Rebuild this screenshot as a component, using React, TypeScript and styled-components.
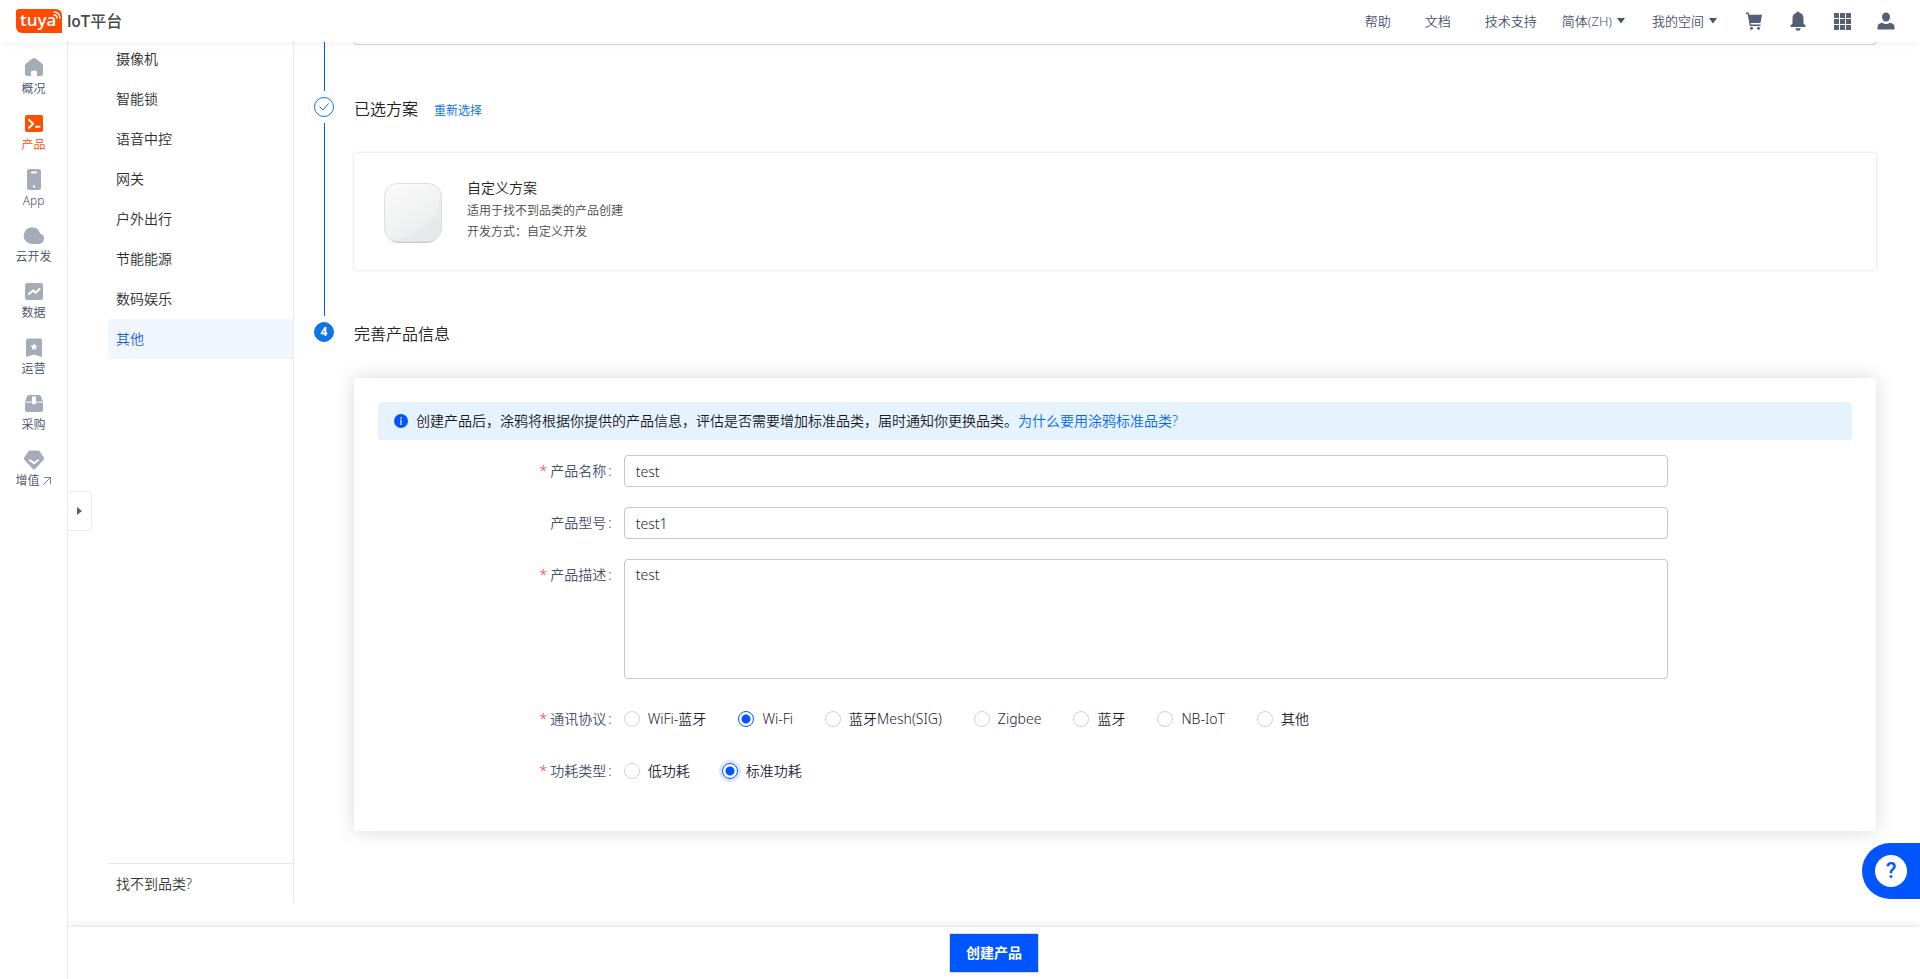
import React, { useState } from "react";
import styled, { createGlobalStyle } from "styled-components";

const GlobalStyle = createGlobalStyle`
  *, *::before, *::after { box-sizing: border-box; }
  body {
    margin: 0;
    background: #fff;
    color: #1f2433;
    font: 350 14px/22px "Noto Sans", "Noto Sans CJK SC", sans-serif;
  }
  button, input, textarea { font: inherit; color: inherit; }
  a { color: #0068f0; text-decoration: none; }
  ul, ol { margin: 0; padding: 0; list-style: none; }
`;

const Page = styled.div`
  display: flex;
  flex-direction: column;
  min-height: 100vh;
`;

/* ---------- top bar ---------- */

const TopBar = styled.header`
  position: sticky;
  top: 0;
  z-index: 10;
  display: flex;
  align-items: center;
  justify-content: space-between;
  height: 42px;
  padding: 0 24px 0 16px;
  background: #fff;
  box-shadow: 0 2px 8px rgba(0, 0, 0, 0.06);
`;

const Brand = styled.a`
  display: flex;
  align-items: center;
  gap: 5px;
  color: #4a4a4a;
`;

const BrandMark = styled.span`
  position: relative;
  width: 46px;
  height: 24px;
  padding-left: 4px;
  border-radius: 3px 6px 0 6px;
  background: #ff4a00;
  color: #fff;
  font: 600 17px/22px "Open Sans", sans-serif;

  svg {
    position: absolute;
    top: 2px;
    right: 1px;
  }
`;

const BrandName = styled.span`
  padding-top: 1px;
  font: 500 16px/24px Roboto, "Noto Sans CJK SC", sans-serif;
`;

const TopNav = styled.nav`
  display: flex;
  align-items: center;
  color: #48526a;
  font-size: 13px;
  line-height: 20px;
`;

const TopLink = styled.a`
  margin-right: 34px;
  color: inherit;

  &:last-of-type { margin-right: 25px; }
`;

const DropButton = styled.button`
  display: flex;
  align-items: center;
  gap: 5px;
  margin-right: 27px;
  padding: 0;
  border: 0;
  background: none;
`;

const IconButton = styled.button`
  display: flex;
  margin-left: 24px;
  padding: 0;
  border: 0;
  background: none;
  color: #555f75;

  &:first-child { margin-left: 0; }
`;

const IconGroup = styled.div`
  display: flex;
`;

/* ---------- frame ---------- */

const Frame = styled.div`
  display: flex;
  flex: 1;
`;

const Rail = styled.nav`
  flex: none;
  width: 68px;
  padding-top: 13px;
  border-right: 1px solid #e9eaf1;
`;

const RailLink = styled.a<{ $active?: boolean }>`
  display: flex;
  flex-direction: column;
  align-items: center;
  height: 44px;
  margin-bottom: 12px;
  color: ${(p) => (p.$active ? "#ff4a00" : "#434e66")};
  font-size: 12px;
  line-height: 20px;

  > svg { flex: none; color: ${(p) => (p.$active ? "#ff5000" : "#a4abb9")}; }
`;

const RailLabel = styled.span`
  display: flex;
  align-items: center;
  gap: 2px;
`;

const RailToggle = styled.button`
  position: absolute;
  top: 491px;
  left: 67px;
  display: flex;
  align-items: center;
  justify-content: center;
  width: 25px;
  height: 40px;
  padding: 0;
  border: 1px solid #e9eaf1;
  border-radius: 0 4px 4px 0;
  background: #fff;
`;

const Content = styled.div`
  display: flex;
  flex: 1;
  flex-direction: column;
  min-width: 0;
`;

const Workspace = styled.div`
  display: flex;
  flex: 1;
  padding: 0 44px 24px 40px;
`;

const Sidebar = styled.aside`
  display: flex;
  flex: none;
  flex-direction: column;
  width: 186px;
  border-right: 1px solid #e8e9ec;
`;

const CategoryList = styled.ul`
  flex: 1;
  margin-top: -3px;
`;

const CategoryLink = styled.a<{ $active?: boolean }>`
  display: block;
  padding: 0 8px;
  background: ${(p) => (p.$active ? "#f1f6fe" : "transparent")};
  color: ${(p) => (p.$active ? "#1a60e0" : "#2c2c2c")};
  line-height: 40px;
`;

const MissingCategory = styled.a`
  padding: 0 8px;
  border-top: 1px solid #e8e8e8;
  color: #383838;
  line-height: 39px;
`;

/* ---------- steps ---------- */

const Steps = styled.ol`
  flex: 1;
  min-width: 0;
  padding-left: 20px;
`;

const Step = styled.li`
  display: grid;
  grid-template-columns: 20px 1fr;
  column-gap: 20px;
`;

const StepTrack = styled.div`
  display: flex;
  flex-direction: column;
  align-items: center;
`;

const StepLine = styled.span<{ $first?: boolean }>`
  flex: 1;
  width: 1px;
  margin: ${(p) => (p.$first ? "0 0 6px" : "6px 0")};
  background: #0055ff;
`;

const StepDot = styled.span<{ $done?: boolean }>`
  display: flex;
  align-items: center;
  justify-content: center;
  width: 20px;
  height: 20px;
  border: 1px solid #1173e6;
  border-radius: 50%;
  background: ${(p) => (p.$done ? "#fff" : "#1173e6")};
  color: ${(p) => (p.$done ? "#1173e6" : "#fff")};
  font-size: 12px;
  font-weight: 700;
  line-height: 18px;
`;

const StepHead = styled.div`
  display: flex;
  align-items: baseline;
  gap: 16px;
  height: 24px;
  margin-bottom: 32px;
  color: #222;

  a { font-size: 12px; }
`;

const StepTitle = styled.h2`
  margin: 0;
  font-size: 16px;
  font-weight: 350;
  line-height: 24px;
`;

const PanelEnd = styled.div`
  height: 3px;
  margin-bottom: 52px;
  border: solid #d5d5d5;
  border-width: 0 1px 1px;
  border-radius: 0 0 4px 4px;
`;

const PlanCard = styled.section`
  display: flex;
  gap: 25px;
  margin-bottom: 52px;
  padding: 24px 30px 27px;
  border-radius: 2px;
  box-shadow: 0 0 3px rgba(0, 0, 0, 0.18);

  svg { margin-top: 6px; }
`;

const PlanName = styled.h3`
  margin: 0 0 1px;
  color: #222;
  font-size: 14px;
  font-weight: 350;
  line-height: 22px;
`;

const PlanNote = styled.p`
  margin: 0;
  color: #484848;
  font-size: 12px;
  line-height: 21px;
`;

/* ---------- form ---------- */

const FormCard = styled.form`
  padding: 24px;
  border-radius: 4px;
  box-shadow: 0 0 20px rgba(0, 0, 0, 0.16);
`;

const Notice = styled.p`
  display: flex;
  align-items: center;
  gap: 8px;
  height: 38px;
  margin: 0 0 15px;
  padding: 0 16px;
  border-radius: 4px;
  background: #e7f2ff;
  color: #151922;
`;

const Field = styled.div<{ $tall?: boolean }>`
  display: grid;
  grid-template-columns: 4fr 17fr 3fr;
  margin-bottom: ${(p) => (p.$tall ? 24 : 20)}px;
`;

const labelStyle = `
  padding-right: 12px;
  color: #485067;
  line-height: 32px;
  text-align: right;
`;

const FieldLabel = styled.label`${labelStyle}`;
const GroupLabel = styled.span`${labelStyle}`;

const Star = styled.span`
  margin-right: 3px;
  color: #f5333f;
`;

const Colon = styled.span`
  margin-left: 2px;
`;

const TextBox = styled.input`
  height: 32px;
  min-width: 0;
  padding: 0 11px;
  border: 1px solid #c5c7d0;
  border-radius: 4px;
  background: #fff;
  outline: none;
`;

const TextArea = styled.textarea`
  height: 120px;
  min-width: 0;
  padding: 4px 11px;
  border: 1px solid #c5c7d0;
  border-radius: 4px;
  background: #fff;
  outline: none;
  resize: none;
`;

const RadioRow = styled.div`
  display: flex;
  flex-wrap: wrap;
  gap: 0 32px;
`;

const RadioLabel = styled.label`
  display: flex;
  align-items: center;
  gap: 8px;
  line-height: 32px;
`;

const Radio = styled.input<{ $ring?: boolean }>`
  appearance: none;
  width: 16px;
  height: 16px;
  margin: 0;
  border: 1px solid #cfd2dc;
  border-radius: 50%;
  background: #fff;

  &:checked {
    border-color: #0055ff;
    background: radial-gradient(circle, #0055ff 4px, #fff 5px);
    box-shadow: ${(p) => (p.$ring ? "0 0 0 3px rgba(0, 85, 255, 0.14)" : "none")};
  }
`;

/* ---------- footer and help ---------- */

const ActionBar = styled.footer`
  position: sticky;
  bottom: 0;
  display: flex;
  align-items: center;
  justify-content: center;
  height: 52px;
  background: #fff;
  box-shadow: 0 0 8px rgba(0, 0, 0, 0.18);
  clip-path: inset(-12px 0 0 0);
`;

const CreateButton = styled.button`
  height: 40px;
  padding: 0 16px;
  border: 1px solid #d5dcec;
  background: #0055ff;
  color: #fff;
  font-weight: 700;
`;

const HelpButton = styled.button`
  position: fixed;
  right: 0;
  bottom: 80px;
  z-index: 11;
  display: flex;
  align-items: center;
  width: 58px;
  height: 56px;
  padding: 0 13px;
  border: 0;
  border-radius: 28px 0 0 28px;
  background: #0055ff;
`;

const HelpMark = styled.span`
  flex: none;
  width: 32px;
  height: 32px;
  border-radius: 50%;
  background: #fff;
  color: #0055ff;
  font: 500 22px/32px Roboto, sans-serif;
`;

/* ---------- drawings ---------- */

const Caret = () => (
  <svg width="8" height="6" viewBox="0 0 8 6" aria-hidden="true">
    <path d="M0 0h8L4 5.5z" fill="currentColor" />
  </svg>
);

const Glyph = ({ children }: { children: React.ReactNode }) => (
  <svg width="24" height="24" viewBox="0 0 24 24" fill="currentColor" aria-hidden="true">
    {children}
  </svg>
);

const white = { fill: "none", stroke: "#fff", strokeWidth: 2, strokeLinecap: "round", strokeLinejoin: "round" } as const;

const railItems = [
  {
    label: "概况",
    icon: <path d="M10.5 3.5a2.5 2.5 0 0 1 3 0l6.2 4.7c.8.6 1.3 1.4 1.3 2.4v8.2a2.2 2.2 0 0 1-2.2 2.2H15v-4.2a1 1 0 0 0-1-1h-4a1 1 0 0 0-1 1V21H5.2A2.2 2.2 0 0 1 3 18.8v-8.2c0-1 .5-1.8 1.3-2.4z" />,
  },
  {
    label: "产品",
    active: true,
    icon: (
      <>
        <rect x="3" y="4" width="18" height="17" rx="2" />
        <path d="M7 9l4.2 3.8L7 16.8" {...white} />
        <path d="M14 15.8h3.5" {...white} />
      </>
    ),
  },
  {
    label: "App",
    icon: (
      <>
        <rect x="5" y="2" width="14" height="21" rx="2.5" />
        <path d="M10 5.5h4" {...white} />
        <circle cx="12" cy="19.5" r="1.2" fill="#fff" />
      </>
    ),
  },
  {
    label: "云开发",
    icon: <path d="M10 4.2a8.2 8.2 0 0 1 8 6.2 5.4 5.4 0 0 1-1 10.6H10a8.4 8.4 0 0 1 0-16.8z" />,
  },
  {
    label: "数据",
    icon: (
      <>
        <rect x="3" y="4" width="18" height="17" rx="2.5" />
        <path d="M7 15l4.2-3.8 2.3 2.6L17.5 10" {...white} />
      </>
    ),
  },
  {
    label: "运营",
    icon: (
      <>
        <path d="M6 3.5h12a2 2 0 0 1 2 2V22c-2.5-.7-5.5-1.5-8-2.5-2.5 1-5.5 1.8-8 2.5V5.5a2 2 0 0 1 2-2z" />
        <path d="M12 8.2l1.1 2.2 2.5.4-1.8 1.7.4 2.5-2.2-1.2L9.8 15l.4-2.5-1.8-1.7 2.5-.4z" fill="#fff" />
      </>
    ),
  },
  {
    label: "采购",
    icon: (
      <>
        <path d="M7 4h10a2 2 0 0 1 1.8 1.1L21 10.5H3l2.2-5.4A2 2 0 0 1 7 4z" />
        <path d="M3 12h18v7a2 2 0 0 1-2 2H5a2 2 0 0 1-2-2z" />
        <path d="M3 10.5h18V12H3z" opacity="0.4" />
        <path d="M10 5.5h4v7a.8.8 0 0 1-.8.8h-2.4a.8.8 0 0 1-.8-.8z" fill="#fff" />
      </>
    ),
  },
  {
    label: "增值",
    external: true,
    icon: (
      <>
        <path d="M8 3.5h8a2 2 0 0 1 1.6.8l4.2 6.200a1.8 1.8 0 0 1-.2 2.300l-8.200 8.900a2 2 0 0 1-2.800 0l-8.200-8.900a1.8 1.8 0 0 1-.2-2.300l4.200-6.200A2 2 0 0 1 8 3.500z" />
        <path d="M8 13.2l4 3 4-3" {...white} />
      </>
    ),
  },
];

const categories = ["摄像机", "智能锁", "语音中控", "网关", "户外出行", "节能能源", "数码娱乐", "其他"];
const protocols = ["WiFi-蓝牙", "Wi-Fi", "蓝牙Mesh(SIG)", "Zigbee", "蓝牙", "NB-IoT", "其他"];
const powerTypes = ["低功耗", "标准功耗"];

const PlanPicture = () => (
  <svg width="58" height="60" viewBox="0 0 58 60" aria-hidden="true">
    <defs>
      <linearGradient id="tile" x1="0" y1="0" x2="0.6" y2="1">
        <stop offset="0" stopColor="#fbfbfb" />
        <stop offset="1" stopColor="#ebeced" />
      </linearGradient>
    </defs>
    <rect x="2" y="4" width="54" height="56" rx="13" fill="#c8cbd2" />
    <rect x="0.5" y="0.5" width="57" height="58" rx="13" fill="url(#tile)" stroke="#dcdee2" />
    <path d="M56 12c0 20-17 37-44 46h33a12 12 0 0 0 12-12V12z" fill="#e2e4e4" opacity="0.4" />
  </svg>
);

type RadioFieldProps = {
  label: string;
  name: string;
  options: string[];
  value: string;
  ring?: boolean;
  onChange: (value: string) => void;
};

const RadioField = ({ label, name, options, value, ring, onChange }: RadioFieldProps) => (
  <Field role="radiogroup" aria-labelledby={`${name}-label`}>
    <GroupLabel id={`${name}-label`}><Star>*</Star>{label}<Colon>:</Colon></GroupLabel>
    <RadioRow>
      {options.map((option) => (
        <RadioLabel key={option}>
          <Radio
            type="radio"
            name={name}
            $ring={ring}
            checked={value === option}
            onChange={() => onChange(option)}
          />
          {option}
        </RadioLabel>
      ))}
    </RadioRow>
  </Field>
);

export default function App() {
  const [protocol, setProtocol] = useState("Wi-Fi");
  const [power, setPower] = useState("标准功耗");

  return (
    <Page>
      <GlobalStyle />
      <TopBar>
        <Brand href="#">
          <BrandMark>
            tuya
            <svg width="8" height="8" viewBox="0 0 8 8" fill="none" stroke="#fff" strokeLinecap="round" aria-hidden="true">
              <path d="M1 1a6 6 0 0 1 6 6" strokeWidth="1.3" />
              <path d="M1 4a3 3 0 0 1 3 3" strokeWidth="1.3" />
            </svg>
          </BrandMark>
          <BrandName>IoT平台</BrandName>
        </Brand>
        <TopNav>
          <TopLink href="#">帮助</TopLink>
          <TopLink href="#">文档</TopLink>
          <TopLink href="#">技术支持</TopLink>
          <DropButton type="button">简体(ZH)<Caret /></DropButton>
          <DropButton type="button">我的空间<Caret /></DropButton>
          <IconGroup>
            <IconButton type="button" aria-label="购物车">
              <svg width="20" height="20" viewBox="0 0 20 20" fill="currentColor" aria-hidden="true">
                <path d="M2 1.5h2.7l.6 2.3H18l-1.5 8.2H6.7l.3 1.5h9.5V15H5.8L3.6 3H2z" />
                <circle cx="7.5" cy="17.2" r="1.5" />
                <circle cx="14.5" cy="17.2" r="1.5" />
              </svg>
            </IconButton>
            <IconButton type="button" aria-label="通知">
              <svg width="20" height="20" viewBox="0 0 20 20" fill="currentColor" aria-hidden="true">
                <path d="M10 .5a1.5 1.5 0 0 1 1.5 1.2A5.5 5.5 0 0 1 15.5 7v5.5l2 2V16h-15v-1.5l2-2V7a5.5 5.5 0 0 1 4-5.3A1.5 1.5 0 0 1 10 .5z" />
                <path d="M7.5 17.3h5a2.5 2.5 0 0 1-5 0z" />
              </svg>
            </IconButton>
            <IconButton type="button" aria-label="应用">
              <svg width="20" height="20" viewBox="0 0 20 20" fill="currentColor" aria-hidden="true">
                {[2, 8, 14].map((y) =>
                  [2, 8, 14].map((x) => <rect key={`${x}-${y}`} x={x} y={y} width="5" height="5" />)
                )}
              </svg>
            </IconButton>
            <IconButton type="button" aria-label="账号">
              <svg width="20" height="20" viewBox="0 0 20 20" fill="currentColor" aria-hidden="true">
                <ellipse cx="10" cy="6" rx="4" ry="4.6" />
                <path d="M1.5 18.5v-2.5c0-2.5 2-4 4.8-4.3 2 1.7 5.4 1.7 7.4 0 2.8.3 4.8 1.8 4.8 4.3v2.5z" />
              </svg>
            </IconButton>
          </IconGroup>
        </TopNav>
      </TopBar>

      <Frame>
        <Rail>
          {railItems.map((item) => (
            <RailLink key={item.label} href="#" $active={item.active}>
              <Glyph>{item.icon}</Glyph>
              <RailLabel>
                {item.label}
                {item.external && (
                  <svg width="10" height="10" viewBox="0 0 10 10" fill="none" stroke="#7b8496" aria-hidden="true">
                    <path d="M2 1.5h6.5V8M8.5 1.5L1 9" />
                  </svg>
                )}
              </RailLabel>
            </RailLink>
          ))}
        </Rail>
        <RailToggle type="button" aria-label="展开">
          <svg width="5" height="8" viewBox="0 0 5 8" aria-hidden="true">
            <path d="M0 0l5 4-5 4z" fill="#555f75" />
          </svg>
        </RailToggle>

        <Content>
          <Workspace>
            <Sidebar>
              <CategoryList>
                {categories.map((name) => (
                  <li key={name}>
                    <CategoryLink href="#" $active={name === "其他"}>{name}</CategoryLink>
                  </li>
                ))}
              </CategoryList>
              <MissingCategory href="#">找不到品类?</MissingCategory>
            </Sidebar>

            <Steps>
              <Step>
                <StepTrack><StepLine $first /></StepTrack>
                <PanelEnd />
              </Step>
              <Step>
                <StepTrack>
                  <StepDot $done>
                    <svg width="10" height="8" viewBox="0 0 10 8" fill="none" stroke="currentColor" aria-hidden="true">
                      <path d="M0.5 3.5l3.5 3.5 5.5-6.5" />
                    </svg>
                  </StepDot>
                  <StepLine />
                </StepTrack>
                <div>
                  <StepHead>
                    <StepTitle>已选方案</StepTitle>
                    <a href="#">重新选择</a>
                  </StepHead>
                  <PlanCard>
                    <PlanPicture />
                    <div>
                      <PlanName>自定义方案</PlanName>
                      <PlanNote>适用于找不到品类的产品创建</PlanNote>
                      <PlanNote>开发方式：自定义开发</PlanNote>
                    </div>
                  </PlanCard>
                </div>
              </Step>
              <Step>
                <StepTrack><StepDot>4</StepDot></StepTrack>
                <div>
                  <StepHead><StepTitle>完善产品信息</StepTitle></StepHead>
                  <FormCard id="product" onSubmit={(e) => e.preventDefault()}>
                    <Notice>
                      <svg width="14" height="14" viewBox="0 0 14 14" aria-hidden="true">
                        <circle cx="7" cy="7" r="7" fill="#0055ff" />
                        <path d="M6.4 3h1.2v1.4H6.4zM6.4 5.6h1.2V11H6.4z" fill="#fff" />
                      </svg>
                      <span>
                        创建产品后，涂鸦将根据你提供的产品信息，评估是否需要增加标准品类，届时通知你更换品类。
                        <a href="#">为什么要用涂鸦标准品类?</a>
                      </span>
                    </Notice>
                    <Field>
                      <FieldLabel htmlFor="name"><Star>*</Star>产品名称<Colon>:</Colon></FieldLabel>
                      <TextBox id="name" defaultValue="test" />
                    </Field>
                    <Field>
                      <FieldLabel htmlFor="model">产品型号<Colon>:</Colon></FieldLabel>
                      <TextBox id="model" defaultValue="test1" />
                    </Field>
                    <Field $tall>
                      <FieldLabel htmlFor="desc"><Star>*</Star>产品描述<Colon>:</Colon></FieldLabel>
                      <TextArea id="desc" defaultValue="test" />
                    </Field>
                    <RadioField label="通讯协议" name="protocol" options={protocols} value={protocol} onChange={setProtocol} />
                    <RadioField label="功耗类型" name="power" options={powerTypes} value={power} ring onChange={setPower} />
                  </FormCard>
                </div>
              </Step>
            </Steps>
          </Workspace>
          <ActionBar>
            <CreateButton type="submit" form="product">创建产品</CreateButton>
          </ActionBar>
        </Content>
      </Frame>

      <HelpButton type="button" aria-label="帮助中心"><HelpMark>?</HelpMark></HelpButton>
    </Page>
  );
}
